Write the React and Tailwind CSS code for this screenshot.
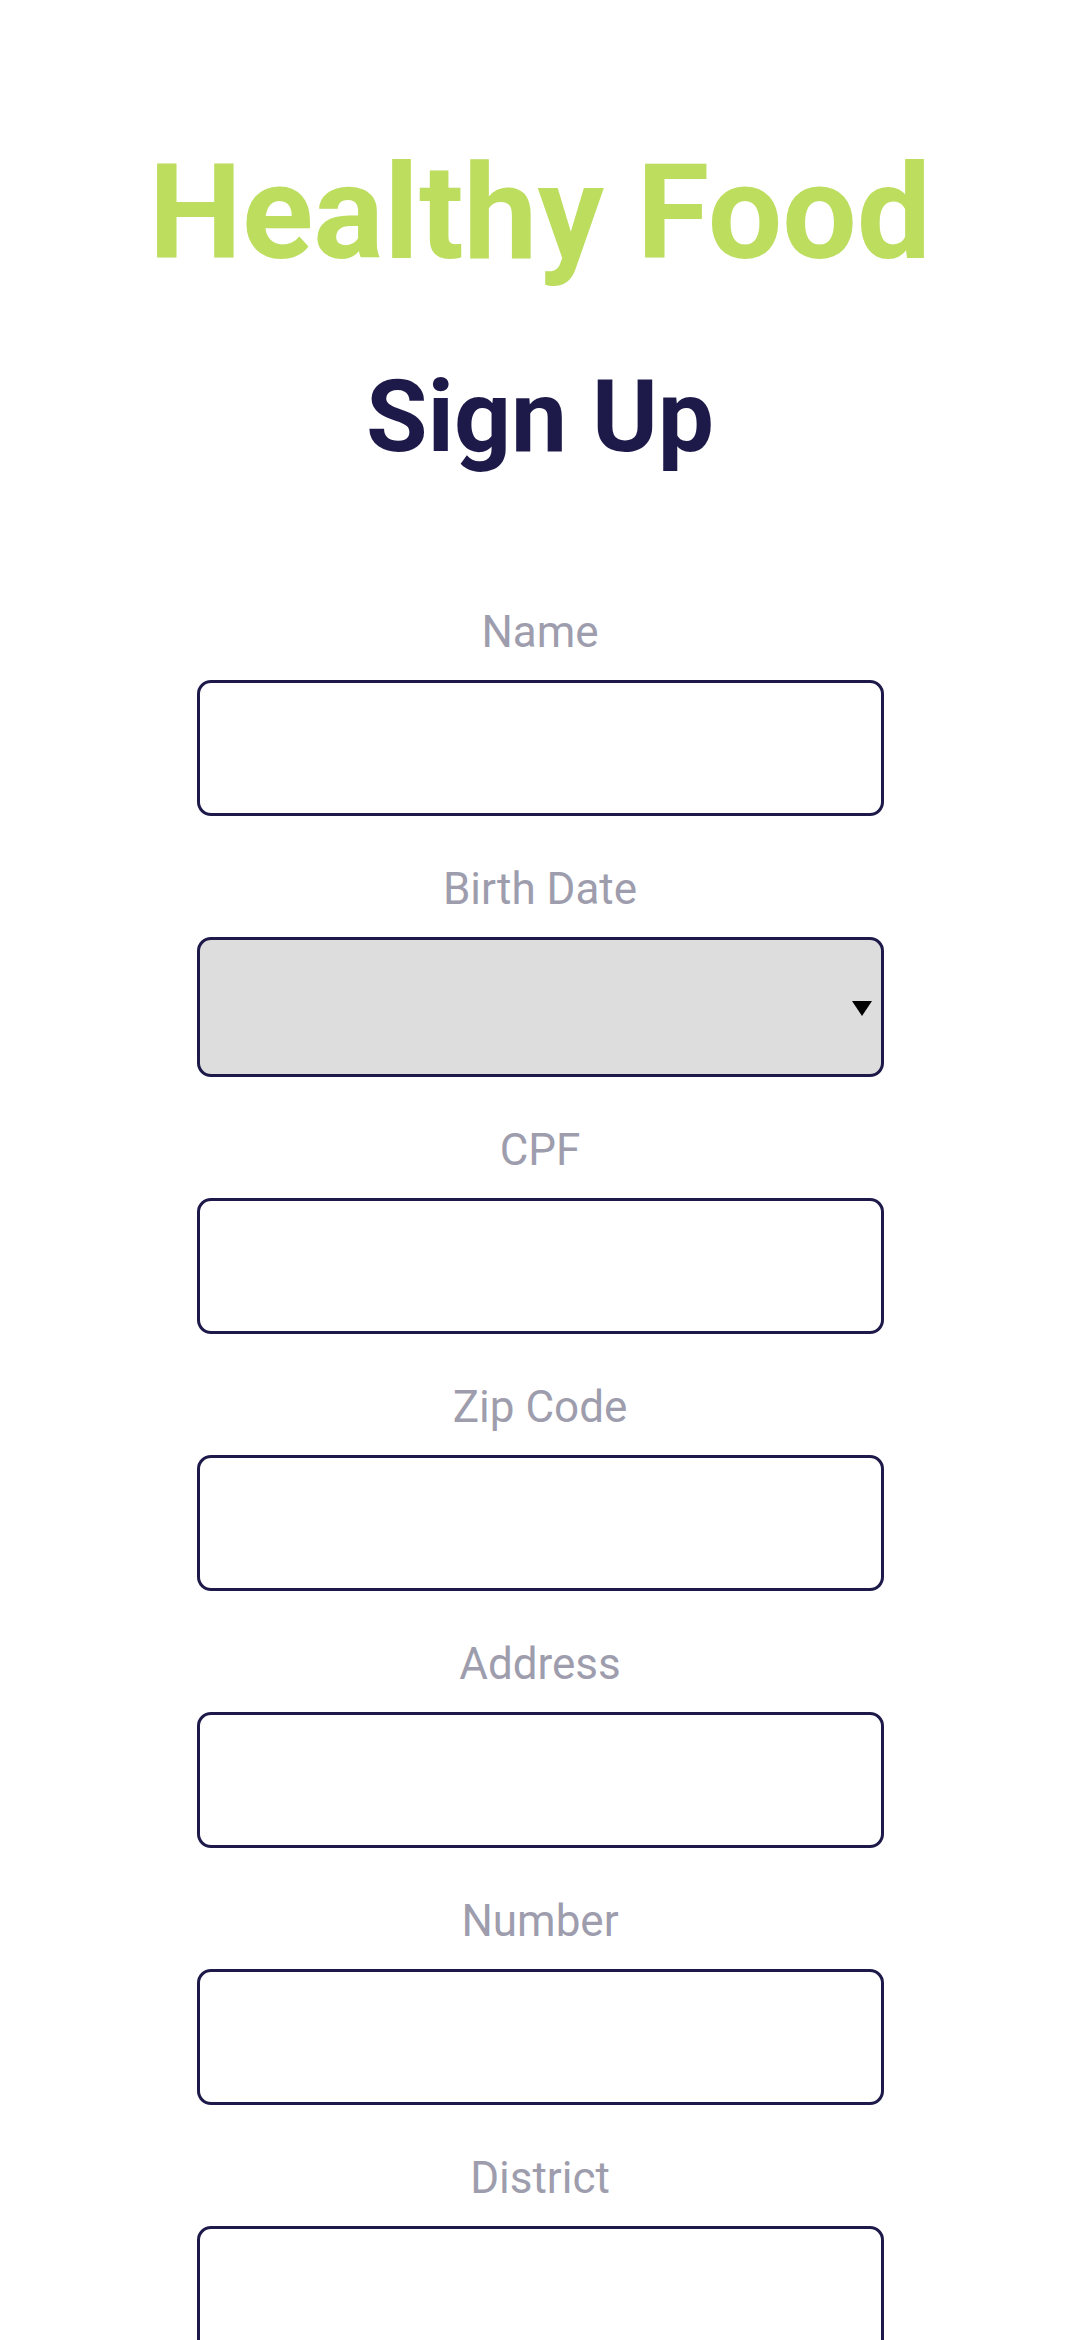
import React from "react";

const fields = ["Name", "Birth Date", "CPF", "Zip Code", "Address", "Number", "District"];

const Field = ({ label }) => {
    const isDate = label === "Birth Date";
    return (
        <div className="flex flex-col items-center w-full">
            <label className="text-[44px] leading-[52px] text-[#9e9dad] mt-[1px]">{label}</label>
            {isDate ? (
                <div className="mt-[22px] w-[687px] h-[140px] rounded-[14px] border-[3px] border-[#1d1a4a] bg-[#dddddd] flex items-center justify-end pr-[9px]">
                    <svg width="20" height="15" viewBox="0 0 20 15" className="mt-[3px]">
                        <polygon points="0,0 20,0 10,15" fill="#000" />
                    </svg>
                </div>
            ) : (
                <input
                    type="text"
                    className="mt-[22px] w-[687px] h-[136px] rounded-[14px] border-[3px] border-[#1d1a4a] bg-white px-4 text-[40px] outline-none"
                />
            )}
        </div>
    );
};

export default function App() {
    return (
        <div className="min-h-screen bg-white flex flex-col items-center font-['Roboto',sans-serif]">
            <h1 className="mt-[147px] text-[132px] leading-none font-bold text-[#bcdd5e]">Healthy Food</h1>
            <h2 className="mt-[88px] text-[100px] leading-none font-bold text-[#1d1a4a]">Sign Up</h2>

            <form className="mt-[138px] flex flex-col items-center gap-[46px] w-full pb-16">
                {fields.map((f) => (
                    <Field key={f} label={f} />
                ))}
            </form>
        </div>
    );
}
